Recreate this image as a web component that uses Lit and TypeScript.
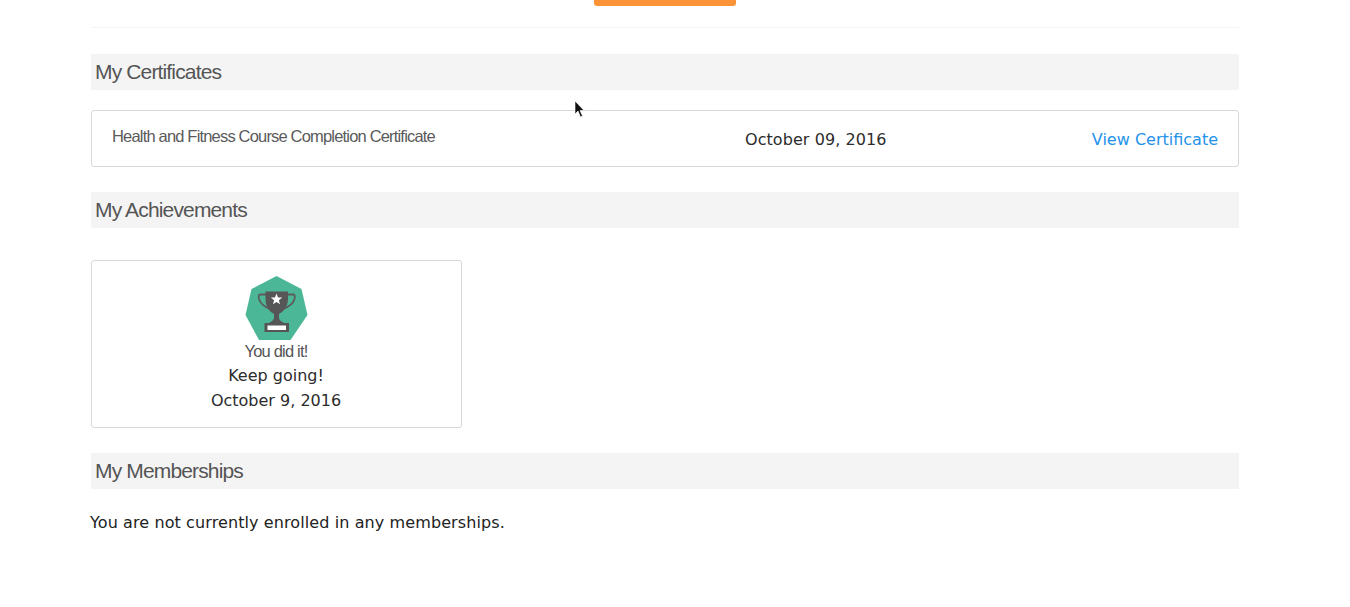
import { LitElement, html, css } from "lit";
import { customElement } from "lit/decorators.js";

@customElement("app-root")
export class AppRoot extends LitElement {
  static styles = css`
    :host { display: block; background: #fff; height: 607px; overflow: hidden; position: relative; font-family: "DejaVu Sans", Verdana, sans-serif; font-size: 16px; color: #222; }
    .page { width: 1148px; margin-left: 91px; display: flex; flex-direction: column; }
    .top { height: 27px; border-bottom: 1px solid #f3f3f3; display: flex; justify-content: center; }
    .btn { width: 142px; height: 6px; background: #fd9337; border-radius: 0 0 3px 3px; }
    .heading { height: 36px; background: #f4f4f4; display: flex; align-items: center; padding-left: 4px; font-family: "Liberation Sans", Arial, sans-serif; font-size: 21px; letter-spacing: -0.85px; color: #555; }
    .h1 { margin-top: 26px; }
    .h2 { margin-top: 25px; }
    .h3 { margin-top: 25px; }
    .cert { box-sizing: border-box; margin-top: 20px; height: 57px; border: 1px solid #d8d8d8; border-radius: 3px; display: grid; grid-template-columns: 633px 1fr auto; align-items: center; padding: 0 20px; }
    .cert-name { font-family: "Liberation Sans", Arial, sans-serif; font-size: 16.5px; letter-spacing: -0.82px; color: #5a5a5a; margin-top: -4px; }
    .date { color: #2c2c2c; letter-spacing: 0.07px; margin-top: 1px; }
    .link { color: #2592ea; text-decoration: none; margin-top: 1px; }
    .ach { box-sizing: border-box; margin-top: 32px; width: 371px; height: 168px; border: 1px solid #d8d8d8; border-radius: 3px; display: flex; flex-direction: column; align-items: center; padding: 15px 1px 0 0; color: #2c2c2c; line-height: 25px; }
    .badge { display: block; width: 63px; height: 66px; }
    .did { font-family: "Liberation Sans", Arial, sans-serif; font-size: 16.5px; letter-spacing: -0.8px; color: #555; line-height: 22px; margin: -2px 0 1px; }
    .none { margin-top: 24px; margin-left: -1px; color: #222; letter-spacing: 0.1px; }
    .cursor { position: absolute; left: 574px; top: 100px; width: 11px; height: 18px; }
  `;

  render() {
    return html`
      <div class="page">
        <div class="top"><div class="btn"></div></div>
        <div class="heading h1">My Certificates</div>
        <div class="cert">
          <div class="cert-name">Health and Fitness Course Completion Certificate</div>
          <div class="date">October 09, 2016</div>
          <a class="link" href="#">View Certificate</a>
        </div>
        <div class="heading h2">My Achievements</div>
        <div class="ach">
          <svg class="badge" viewBox="0 0 63 66">
            <polygon points="31.5,0 56.5,13 62.5,39 45.5,64 14,64 0.5,39 6.5,13" fill="#4cb796"/>
            <path d="M21 18.5 H15 C13.5 18.5 13.5 21 14 23 C15.5 28 20 31 25 33 M42.5 18.5 H48.5 C50 18.5 50 21 49.5 23 C48 28 43.5 31 38 33" fill="none" stroke="#5c5c5c" stroke-width="1.8"/>
            <path d="M20.5 15.5 H43 V23 C43 31 38 36 34 38 V42 C34 44 36 45 39 47 H24 C27 45 29 44 29 42 V38 C25 36 20.5 31 20.5 23 Z" fill="#565656"/>
            <polygon points="31.5,17.5 33,21.4 37.2,21.6 33.9,24.2 35,28.3 31.5,26 28,28.3 29.1,24.2 25.8,21.6 30,21.4" fill="#fff"/>
            <rect x="19.5" y="47" width="24.5" height="9" fill="#555"/>
            <rect x="22.5" y="49.5" width="18.5" height="4.5" fill="#fff"/>
          </svg>
          <div class="did">You did it!</div>
          <div>Keep going!</div>
          <div>October 9, 2016</div>
        </div>
        <div class="heading h3">My Memberships</div>
        <div class="none">You are not currently enrolled in any memberships.</div>
      </div>
      <svg class="cursor" viewBox="0 0 11 18"><path d="M1 1 V14 L4 11 L6.5 17 L8.5 16 L6 10.5 H10 Z" fill="#111" stroke="#fff" stroke-width=".6"/></svg>
    `;
  }
}
